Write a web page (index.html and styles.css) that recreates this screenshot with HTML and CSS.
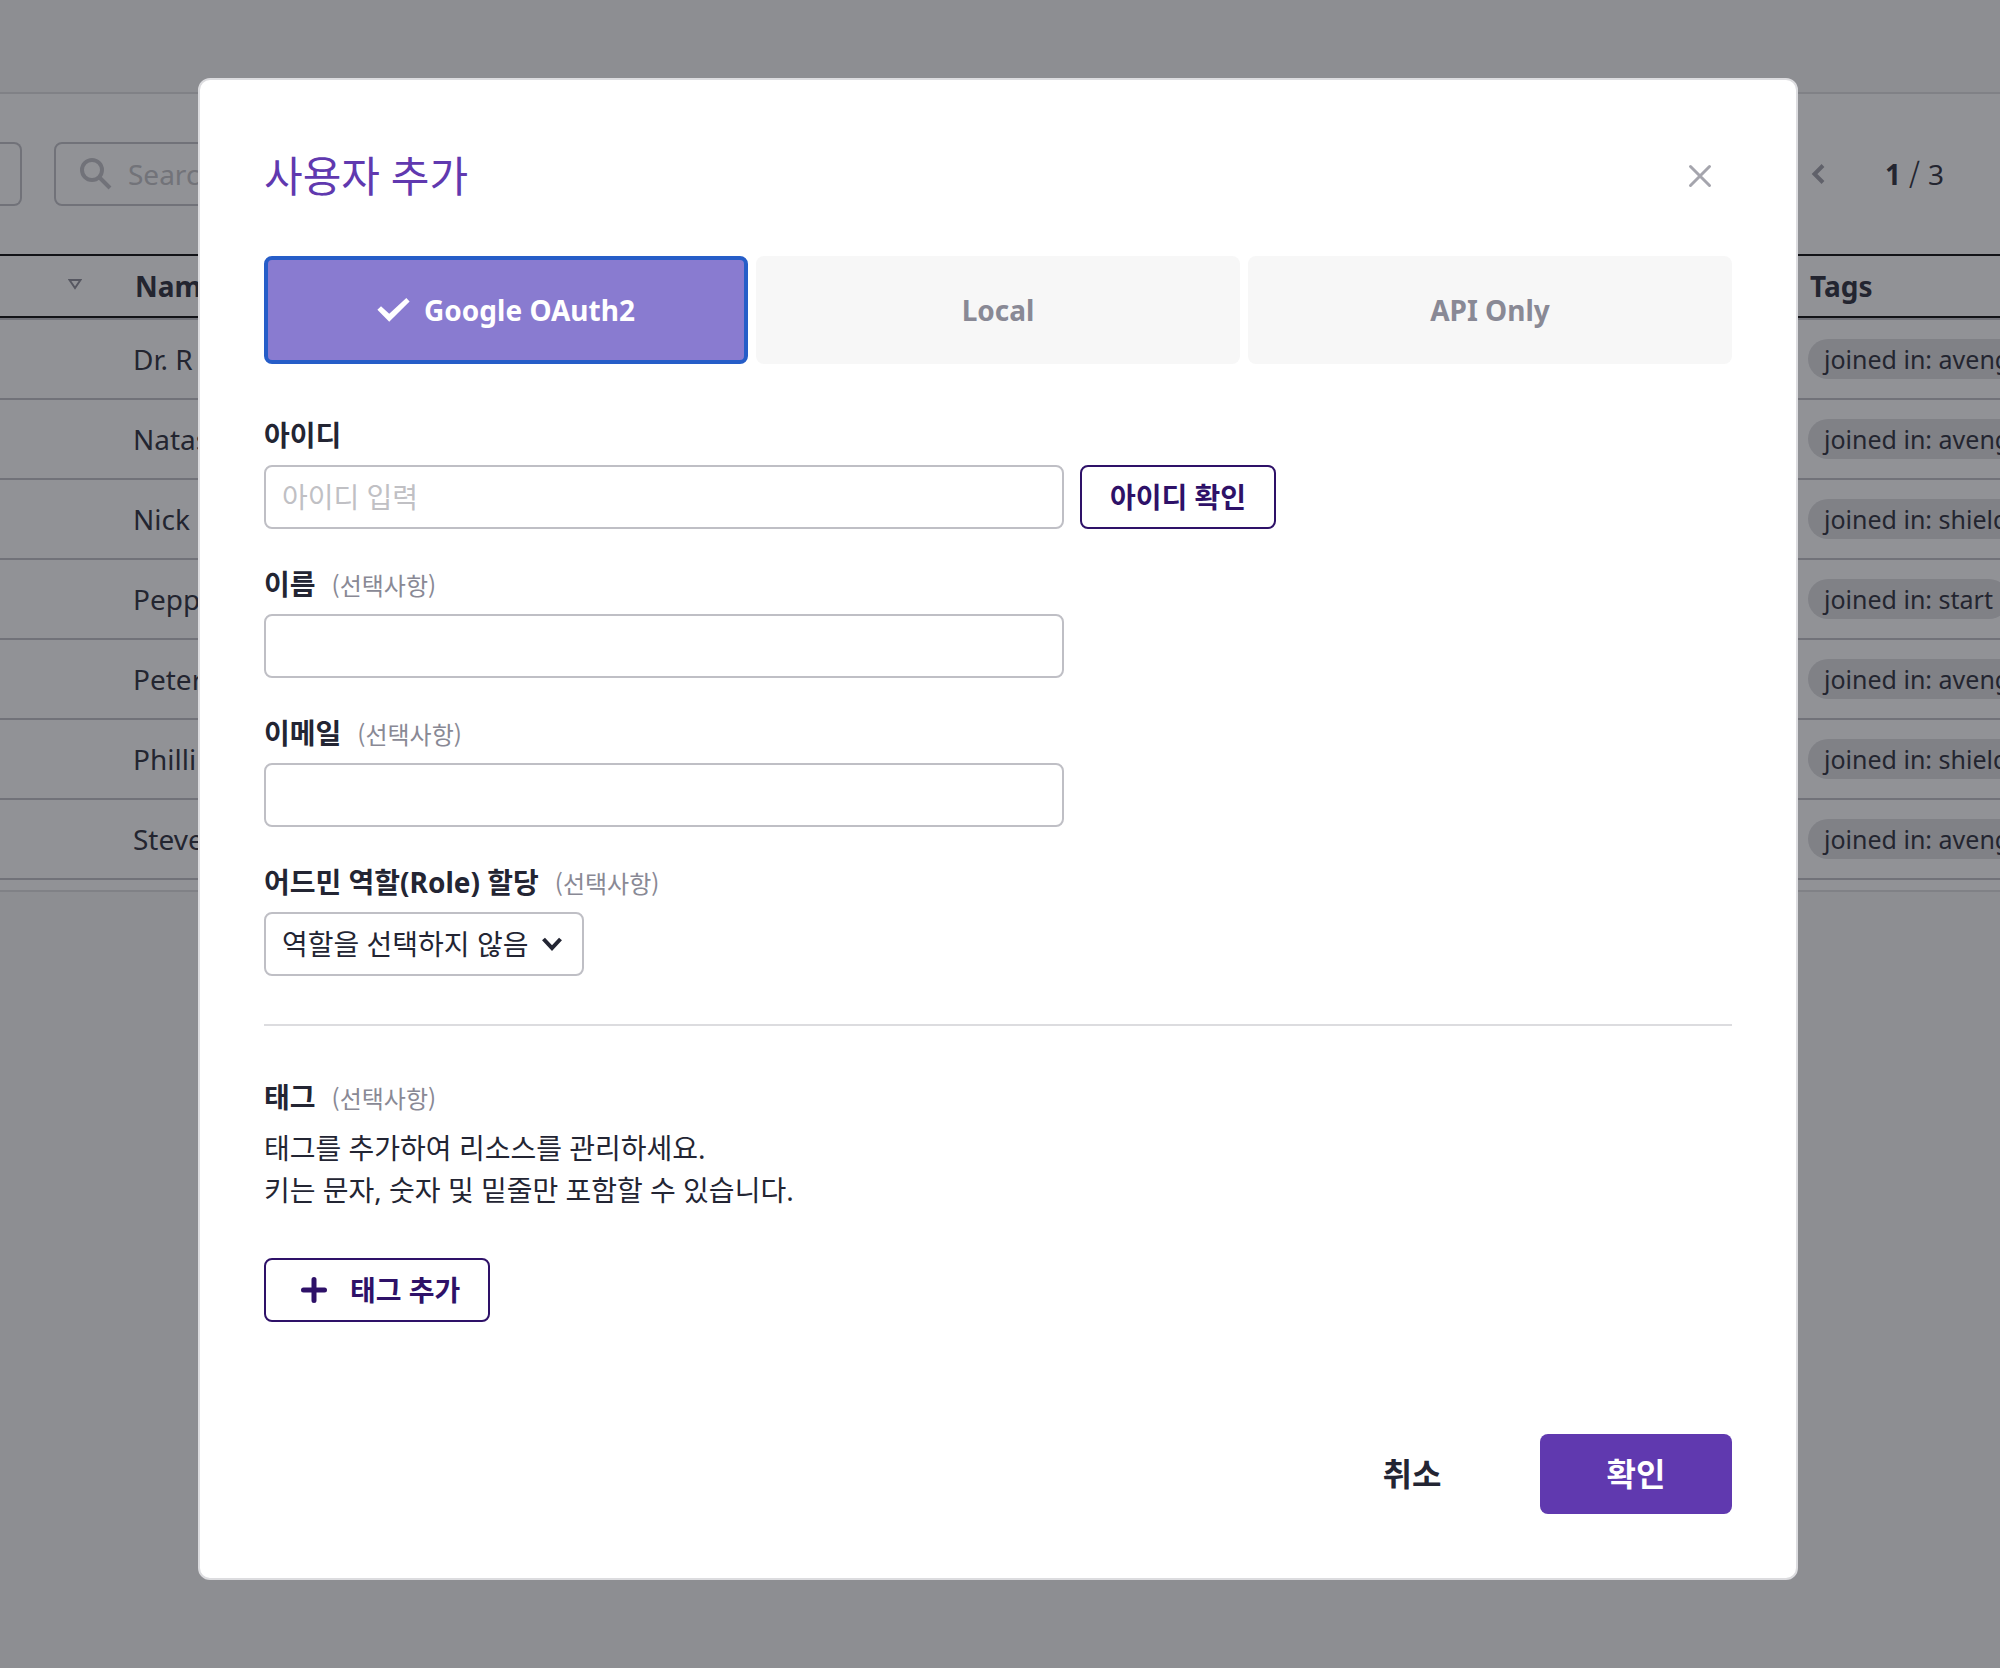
FILE: index.html
```html
<!DOCTYPE html>
<html lang="ko">
<head>
<meta charset="utf-8">
<meta name="viewport" content="width=device-width, initial-scale=1">
<title>사용자 추가</title>
<link rel="stylesheet" href="styles.css">
</head>
<body>
<main class="page">
  <section class="panel">
    <div class="toolbar">
      <button class="toolbar-action" type="button" aria-label="Actions"></button>
      <div class="search">
        <svg class="search-icon" viewBox="0 0 32 32" aria-hidden="true"><circle cx="12" cy="12" r="10"/><path d="M19.500 19.500L30 30"/></svg>
        <input class="search-input" type="text" placeholder="Search" aria-label="Search">
      </div>
      <div class="pager">
        <button class="pager-prev" type="button" aria-label="Previous page">
          <svg viewBox="0 0 14 22" aria-hidden="true"><path d="M12 2.500L3.500 11L12 19.500"/></svg>
        </button>
        <span class="pager-text"><b>1</b><span class="pager-slash">/</span>3</span>
      </div>
    </div>
    <table class="users">
      <colgroup><col class="col-sort"><col><col class="col-tags"></colgroup>
      <thead>
        <tr>
          <th class="sort-cell"><svg class="sort-icon" viewBox="0 0 14 11" aria-hidden="true"><path d="M1.500 1H12.500L7 9Z"/></svg></th>
          <th>Name</th>
          <th>Tags</th>
        </tr>
      </thead>
      <tbody>
        <tr><td></td><td>Dr. R</td><td><span class="tag">joined in: avengers</span></td></tr>
        <tr><td></td><td>Natas</td><td><span class="tag">joined in: avengers</span></td></tr>
        <tr><td></td><td>Nick</td><td><span class="tag">joined in: shield</span></td></tr>
        <tr><td></td><td>Pepp</td><td><span class="tag">joined in: start</span></td></tr>
        <tr><td></td><td>Peter</td><td><span class="tag">joined in: avengers</span></td></tr>
        <tr><td></td><td>Philli</td><td><span class="tag">joined in: shield</span></td></tr>
        <tr><td></td><td>Steve</td><td><span class="tag">joined in: avengers</span></td></tr>
      </tbody>
    </table>
  </section>
</main>

<div class="backdrop">
  <form class="modal" role="dialog" aria-modal="true" aria-labelledby="modal-title">
    <header class="modal-header">
      <h1 class="modal-title" id="modal-title">사용자 추가</h1>
      <button class="close" type="button" aria-label="닫기">
        <svg viewBox="0 0 24 24" aria-hidden="true"><path d="M2.500 2.500L21.500 21.500M21.500 2.500L2.500 21.500"/></svg>
      </button>
    </header>

    <div class="tabs" role="radiogroup" aria-label="인증 방식">
      <label class="tab">
        <input type="radio" name="auth" checked>
        <svg class="check" viewBox="0 0 98 73" aria-hidden="true"><path d="M0 36L11 25L36 48L88 0L98 11L36 72Z"/></svg>
        <span>Google OAuth2</span>
      </label>
      <label class="tab">
        <input type="radio" name="auth">
        <span>Local</span>
      </label>
      <label class="tab">
        <input type="radio" name="auth">
        <span>API Only</span>
      </label>
    </div>

    <div class="fields">
      <div class="field">
        <div class="field-head"><label for="user-id">아이디</label></div>
        <div class="field-row">
          <input class="input" id="user-id" type="text" placeholder="아이디 입력">
          <button class="outline-button" type="button">아이디 확인</button>
        </div>
      </div>
      <div class="field">
        <div class="field-head"><label for="user-name">이름</label><span class="optional">(선택사항)</span></div>
        <input class="input" id="user-name" type="text">
      </div>
      <div class="field">
        <div class="field-head"><label for="user-email">이메일</label><span class="optional">(선택사항)</span></div>
        <input class="input" id="user-email" type="text">
      </div>
      <div class="field">
        <div class="field-head"><label for="user-role">어드민 역할(Role) 할당</label><span class="optional">(선택사항)</span></div>
        <div class="select-wrap">
          <select class="select" id="user-role"><option>역할을 선택하지 않음</option></select>
          <svg class="select-arrow" viewBox="0 0 22 16" aria-hidden="true"><path d="M2.500 3L11 12L19.500 3"/></svg>
        </div>
      </div>
    </div>

    <section class="tags">
      <div class="field-head"><h2>태그</h2><span class="optional">(선택사항)</span></div>
      <p class="tags-help">태그를 추가하여 리소스를 관리하세요.<br>키는 문자, 숫자 및 밑줄만 포함할 수 있습니다.</p>
      <button class="outline-button add-tag" type="button">
        <svg class="plus" viewBox="0 0 26 26" aria-hidden="true"><path d="M13 2.500V23.500M2.500 13H23.500"/></svg>
        태그 추가
      </button>
    </section>

    <footer class="modal-footer">
      <button class="footer-button" type="button">취소</button>
      <button class="footer-button primary" type="submit">확인</button>
    </footer>
  </form>
</div>
</body>
</html>
```
FILE: styles.css
```css
:root {
  --text: #232533;
  --muted: #898995;
  --line: #bfbfc5;
  --line-soft: #dcdcdf;
  --violet: #6039af;
  --violet-dark: #2e1168;
}

* { box-sizing: border-box; }

body {
  margin: 0;
  background: #f6f6f7;
  color: var(--text);
  font-family: "Noto Sans", "Noto Sans CJK KR", sans-serif;
  font-size: 28px;
  line-height: 42px;
}

button, input, select { font: inherit; color: inherit; }
button { padding: 0; border: 0; background: none; cursor: pointer; }
svg { display: block; fill: none; }

/* List page under the dialog */
.page {
  min-height: 100vh;
  padding-top: 92px;
  overflow: hidden;
}

.panel {
  background: #fff;
  border-top: 2px solid var(--line-soft);
  border-bottom: 2px solid var(--line-soft);
  padding-bottom: 10px;
}

.toolbar {
  display: flex;
  align-items: center;
  gap: 32px;
  padding: 48px 56px 48px 0;
}

.toolbar-action {
  width: 22px;
  height: 64px;
  border: 2px solid var(--line);
  border-left: 0;
  border-radius: 0 8px 8px 0;
}

.search {
  display: flex;
  align-items: center;
  gap: 16px;
  width: 480px;
  height: 64px;
  padding: 0 24px;
  border: 2px solid var(--line);
  border-radius: 8px;
}

.search-icon {
  flex: none;
  width: 32px;
  height: 32px;
  stroke: var(--line);
  stroke-width: 4;
}

.search-input {
  flex: 1;
  min-width: 0;
  padding: 0;
  border: 0;
  outline: 0;
  background: none;
}

::placeholder { color: #c0c0c4; opacity: 1; }

.pager {
  display: flex;
  align-items: center;
  gap: 60px;
  margin-left: auto;
}

.pager-prev svg {
  width: 14px;
  height: 22px;
  stroke: #9d9da6;
  stroke-width: 4;
}

.pager-slash {
  margin: 0 8px;
  font-family: "Noto Sans CJK KR", sans-serif;
  line-height: 1;
}

.users {
  width: 100%;
  table-layout: fixed;
  border-collapse: separate;
  border-spacing: 0;
}

.col-sort { width: 117px; }
.col-tags { width: 208px; }

.users th {
  height: 64px;
  padding: 0 18px;
  border-top: 2px solid #000;
  border-bottom: 2px solid #000;
  text-align: left;
}

.users .sort-cell { padding-right: 35px; }

.sort-icon {
  width: 14px;
  height: 11px;
  margin-left: auto;
  margin-bottom: 4px;
  stroke: var(--muted);
  stroke-width: 2;
}

.users td {
  height: 80px;
  padding: 0 16px;
  border-bottom: 2px solid var(--line);
  white-space: nowrap;
}

.users tbody tr:first-child td {
  height: 82px;
  border-top: 2px solid var(--line);
}

.tag {
  display: block;
  width: max-content;
  padding: 0 16px;
  border-radius: 20px;
  background: var(--line-soft);
  font-size: 25px;
  line-height: 40px;
}

/* Dialog */
.backdrop {
  position: fixed;
  inset: 0;
  display: flex;
  justify-content: center;
  align-items: flex-start;
  padding: 78px 4px 78px 0;
  overflow: auto;
  background: rgba(36, 38, 46, 0.5);
}

.modal {
  width: 1600px;
  max-width: 100%;
  padding: 64px;
  border: 2px solid var(--line-soft);
  border-radius: 12px;
  background: #fff;
}

.modal-header {
  display: flex;
  align-items: center;
  justify-content: space-between;
  padding-right: 20px;
}

.modal-title {
  margin: 0;
  color: var(--violet);
  font-size: 42px;
  font-weight: 400;
  line-height: 64px;
}

.close svg {
  width: 24px;
  height: 24px;
  stroke: #a5a5ad;
  stroke-width: 3;
  stroke-linecap: round;
}

.tabs {
  display: grid;
  grid-template-columns: repeat(3, 1fr);
  gap: 8px;
  margin-top: 48px;
}

.tab {
  position: relative;
  display: flex;
  align-items: center;
  justify-content: center;
  gap: 14px;
  height: 108px;
  border-radius: 8px;
  background: #f7f7f7;
  color: var(--muted);
  font-weight: 700;
  cursor: pointer;
}

.tab input {
  position: absolute;
  inset: 0;
  margin: 0;
  opacity: 0;
}

.tab:has(input:checked) {
  border: 4px solid #265dc8;
  background: #897bd0;
  color: #fff;
}

.check {
  width: 33px;
  height: 24px;
}

.check path { fill: #fff; }

.fields {
  display: grid;
  gap: 32px;
  padding: 48px 0;
  border-bottom: 2px solid var(--line-soft);
}

.field-head {
  display: flex;
  align-items: baseline;
  gap: 16px;
  height: 53px;
  padding-top: 2px;
}

.field-head label,
.field-head h2 {
  margin: 0;
  font-size: 28px;
  font-weight: 700;
}

.optional {
  color: var(--muted);
  font-family: "Noto Sans CJK KR", sans-serif;
  font-size: 24px;
}

.field-row {
  display: flex;
  gap: 16px;
}

.input,
.select {
  display: block;
  width: 800px;
  max-width: 100%;
  height: 64px;
  padding: 0 16px;
  border: 2px solid var(--line);
  border-radius: 8px;
  background: #fff;
}

.select-wrap {
  position: relative;
  width: 320px;
}

.select {
  width: 100%;
  appearance: none;
}

.select-arrow {
  position: absolute;
  top: 24px;
  right: 21px;
  width: 22px;
  height: 16px;
  stroke: var(--text);
  stroke-width: 4;
  pointer-events: none;
}

.outline-button {
  height: 64px;
  padding: 0 28px;
  border: 2px solid var(--violet-dark);
  border-radius: 8px;
  background: #fff;
  color: var(--violet-dark);
  font-weight: 700;
}

.tags { padding-top: 48px; }

.tags-help {
  margin: 0 0 47px;
}

.add-tag {
  display: flex;
  align-items: center;
  gap: 23px;
  padding-left: 35px;
}

.plus {
  width: 26px;
  height: 26px;
  stroke: var(--violet-dark);
  stroke-width: 5;
  stroke-linecap: round;
}

.modal-footer {
  display: flex;
  justify-content: flex-end;
  gap: 32px;
  margin-top: 112px;
}

.footer-button {
  width: 192px;
  height: 80px;
  border-radius: 8px;
  font-size: 32px;
  font-weight: 700;
}

.primary {
  background: var(--violet);
  color: #fff;
}
```
